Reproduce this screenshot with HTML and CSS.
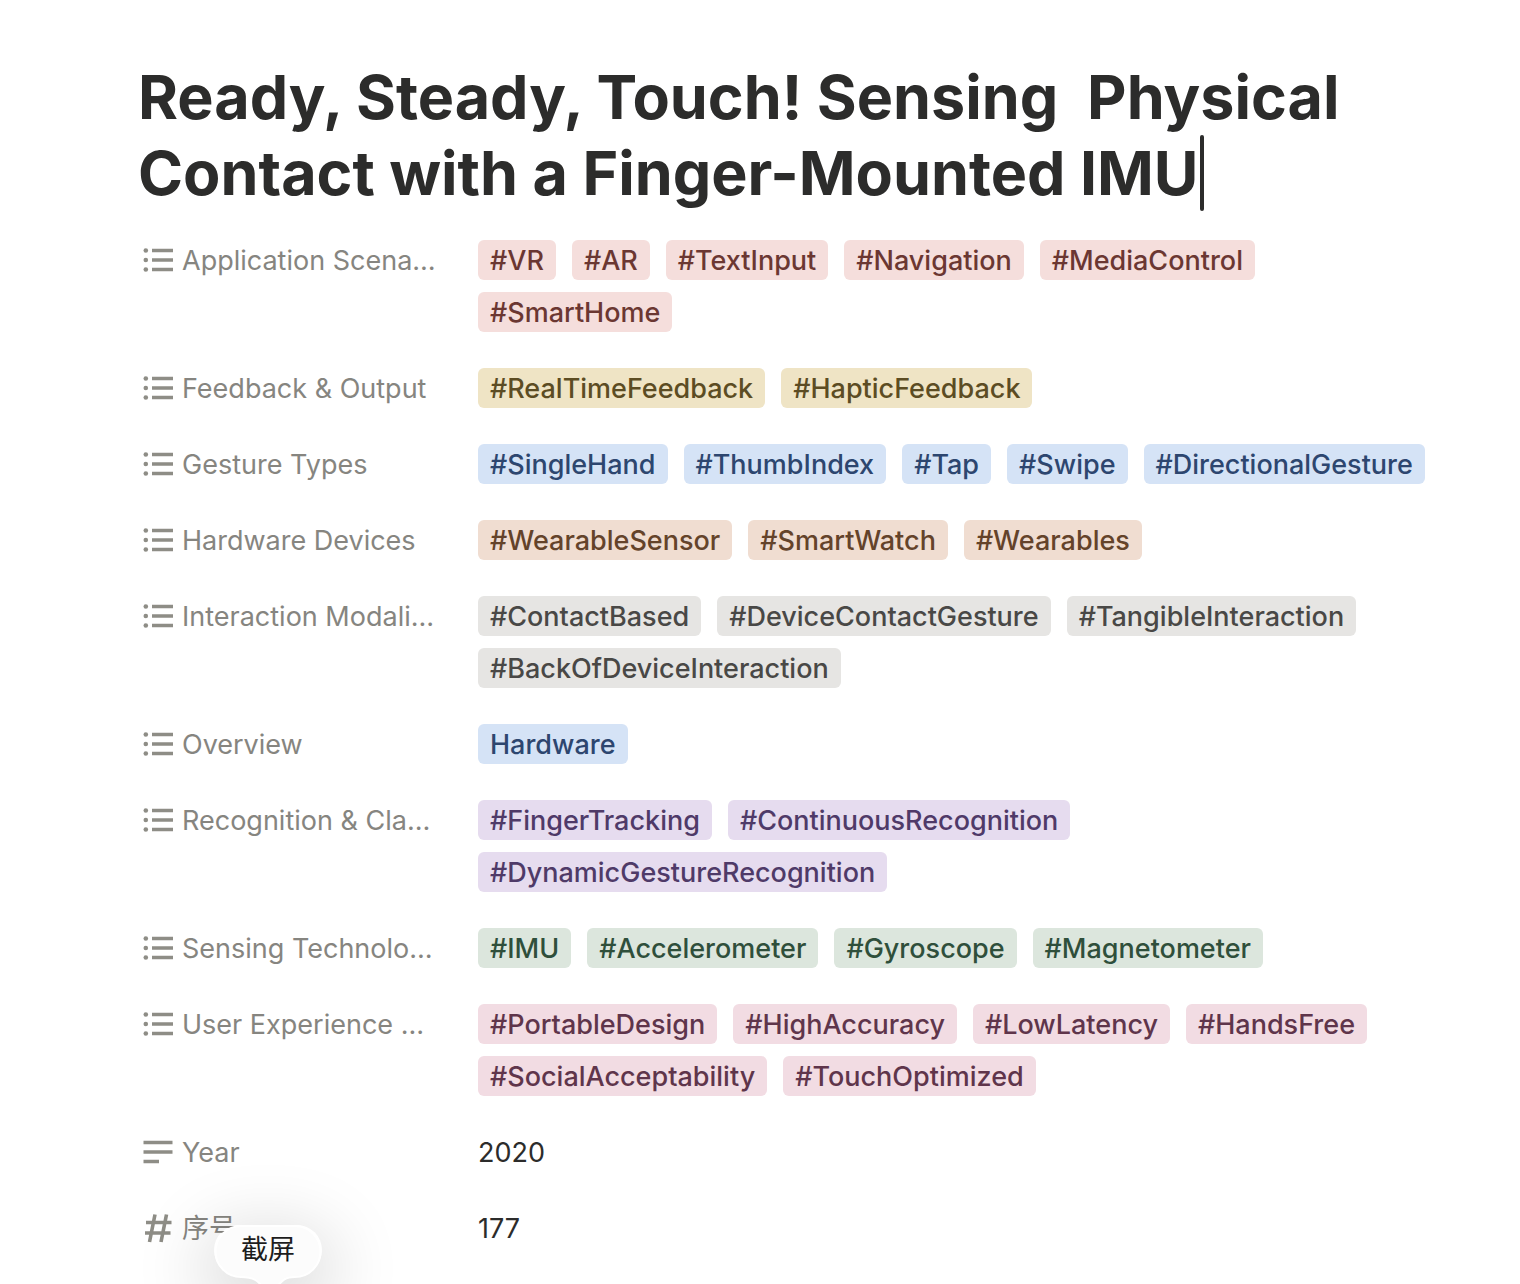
FILE: index.html
```html
<!DOCTYPE html>
<html lang="en">
<head>
<meta charset="utf-8">
<meta name="viewport" content="width=device-width, initial-scale=1">
<title>Ready, Steady, Touch!</title>
<link rel="stylesheet" href="styles.css">
</head>
<body>
<svg class="defs" aria-hidden="true">
  <symbol id="list" viewBox="0 0 32 32">
    <path d="M10 6.500h21M10 16h21M10 25.500h21" stroke="currentColor" stroke-width="3.600"/>
    <g fill="currentColor"><circle cx="3.800" cy="6.500" r="2.300"/><circle cx="3.800" cy="16" r="2.300"/><circle cx="3.800" cy="25.500" r="2.300"/></g>
  </symbol>
  <symbol id="text" viewBox="0 0 32 32">
    <path d="M1.500 6.500h29M1.500 16h29M1.500 25.500h15.500" stroke="currentColor" stroke-width="3.600"/>
  </symbol>
  <symbol id="number" viewBox="0 0 32 32">
    <path d="M13 2.500L7.500 30M24.500 2.500L19 30M4 10.500h25.500M3 21h25.500" stroke="currentColor" stroke-width="3.600"/>
  </symbol>
</svg>
<main class="page">
  <h1 class="title">Ready, Steady, Touch! Sensing&nbsp; Physical Contact with a Finger-Mounted IMU<span class="caret"></span></h1>
  <dl class="props">
    <div class="row">
      <dt class="name"><svg class="icon"><use href="#list"/></svg><span class="label">Application Scena…</span></dt>
      <dd class="value red"><span class="tag">#VR</span><span class="tag">#AR</span><span class="tag">#TextInput</span><span class="tag">#Navigation</span><span class="tag">#MediaControl</span><span class="tag">#SmartHome</span></dd>
    </div>
    <div class="row">
      <dt class="name"><svg class="icon"><use href="#list"/></svg><span class="label">Feedback &amp; Output</span></dt>
      <dd class="value yellow"><span class="tag">#RealTimeFeedback</span><span class="tag">#HapticFeedback</span></dd>
    </div>
    <div class="row">
      <dt class="name"><svg class="icon"><use href="#list"/></svg><span class="label">Gesture Types</span></dt>
      <dd class="value blue"><span class="tag">#SingleHand</span><span class="tag">#ThumbIndex</span><span class="tag">#Tap</span><span class="tag">#Swipe</span><span class="tag">#DirectionalGesture</span></dd>
    </div>
    <div class="row">
      <dt class="name"><svg class="icon"><use href="#list"/></svg><span class="label">Hardware Devices</span></dt>
      <dd class="value orange"><span class="tag">#WearableSensor</span><span class="tag">#SmartWatch</span><span class="tag">#Wearables</span></dd>
    </div>
    <div class="row">
      <dt class="name"><svg class="icon"><use href="#list"/></svg><span class="label">Interaction Modali…</span></dt>
      <dd class="value gray"><span class="tag">#ContactBased</span><span class="tag">#DeviceContactGesture</span><span class="tag">#TangibleInteraction</span><span class="tag">#BackOfDeviceInteraction</span></dd>
    </div>
    <div class="row">
      <dt class="name"><svg class="icon"><use href="#list"/></svg><span class="label">Overview</span></dt>
      <dd class="value blue"><span class="tag">Hardware</span></dd>
    </div>
    <div class="row">
      <dt class="name"><svg class="icon"><use href="#list"/></svg><span class="label">Recognition &amp; Cla…</span></dt>
      <dd class="value purple"><span class="tag">#FingerTracking</span><span class="tag">#ContinuousRecognition</span><span class="tag">#DynamicGestureRecognition</span></dd>
    </div>
    <div class="row">
      <dt class="name"><svg class="icon"><use href="#list"/></svg><span class="label">Sensing Technolo…</span></dt>
      <dd class="value green"><span class="tag">#IMU</span><span class="tag">#Accelerometer</span><span class="tag">#Gyroscope</span><span class="tag">#Magnetometer</span></dd>
    </div>
    <div class="row">
      <dt class="name"><svg class="icon"><use href="#list"/></svg><span class="label">User Experience …</span></dt>
      <dd class="value pink"><span class="tag">#PortableDesign</span><span class="tag">#HighAccuracy</span><span class="tag">#LowLatency</span><span class="tag">#HandsFree</span><span class="tag">#SocialAcceptability</span><span class="tag">#TouchOptimized</span></dd>
    </div>
    <div class="row">
      <dt class="name"><svg class="icon"><use href="#text"/></svg><span class="label">Year</span></dt>
      <dd class="value"><span class="plain">2020</span></dd>
    </div>
    <div class="row">
      <dt class="name"><svg class="icon"><use href="#number"/></svg><span class="label anchor" lang="zh">序号<span class="bubble" role="tooltip"><svg class="bubble-shape" viewBox="0 0 108 68" aria-hidden="true"><path d="M27 1H81A25.500 25.500 0 0 1 81 52C70 52 68 56 61 64Q56 69 51 64C44 56 40 52 27 52A25.500 25.500 0 0 1 27 1Z"/></svg><span class="bubble-text">截屏</span></span></span></dt>
      <dd class="value"><span class="plain">177</span></dd>
    </div>
  </dl>
</main>
</body>
</html>
```
FILE: styles.css
```css
body {
  margin: 0;
  background: #fff;
  color: #2c2c2b;
  font-family: Inter, "Noto Sans CJK SC", sans-serif;
}

.defs {
  display: none;
}

.page {
  box-sizing: border-box;
  min-height: 100vh;
  padding: 59px 80px 0 138px;
  overflow: hidden;
}

.title {
  margin: 0;
  font-size: 61px;
  line-height: 76px;
  font-weight: 700;
}

.caret {
  display: inline-block;
  width: 4px;
  height: 76px;
  margin-left: 1px;
  border-radius: 2px;
  background: #2c2c2b;
  vertical-align: top;
}

.props {
  margin: 23px 0 0;
  font-size: 27px;
}

.row {
  display: flex;
  gap: 16px;
  margin-bottom: 24px;
}

.name {
  display: flex;
  flex: none;
  width: 320px;
  gap: 8px;
  padding-left: 4px;
  color: #868580;
  white-space: nowrap;
}

.icon {
  flex: none;
  width: 32px;
  height: 32px;
  margin: 10px 0;
  color: #8e8d86;
}

.label {
  padding-top: 2px;
  line-height: 50px;
}

.value {
  display: flex;
  flex: 1;
  flex-wrap: wrap;
  gap: 12px 16px;
  margin: 0;
  padding: 6px 0;
}

.tag,
.plain {
  padding-top: 2px;
  line-height: 38px;
}

.tag {
  padding-left: 12px;
  padding-right: 12px;
  border-radius: 6px;
  font-weight: 500;
}

.red .tag { background: #f5dedc; color: #6b3732; }
.yellow .tag { background: #efe4c5; color: #5c4c23; }
.blue .tag { background: #d5e3f6; color: #2d466f; }
.orange .tag { background: #f0ddd1; color: #64432a; }
.gray .tag { background: #e6e5e3; color: #494846; }
.purple .tag { background: #e6dcef; color: #4f3a68; }
.green .tag { background: #dce6dd; color: #2f4f3b; }
.pink .tag { background: #f2dce3; color: #5f354b; }

.anchor {
  position: relative;
}

.bubble {
  position: absolute;
  top: 23px;
  left: 32px;
  width: 108px;
  color: #1d1d1d;
  text-align: center;
  border-radius: 26px;
  box-shadow: 0 18px 70px 14px rgba(0, 0, 0, .15);
}

.bubble-shape {
  position: absolute;
  top: 0;
  left: 0;
  width: 108px;
  height: 68px;
  fill: #fcfcfc;
  stroke: #fff;
  stroke-width: 2px;
}

.bubble-text {
  position: relative;
}
```
